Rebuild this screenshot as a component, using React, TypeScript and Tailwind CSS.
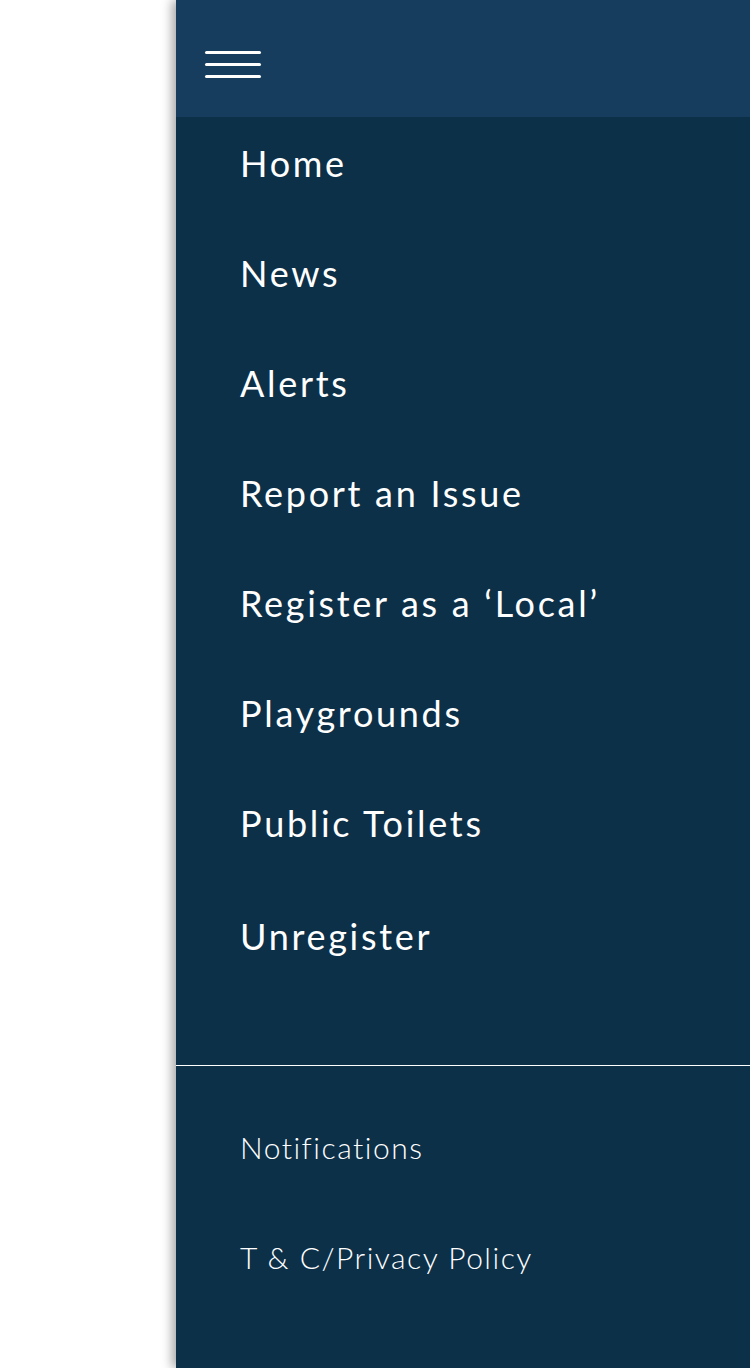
import React from "react";

const items = [
  "Home",
  "News",
  "Alerts",
  "Report an Issue",
  "Register as a \u2018Local\u2019",
  "Playgrounds",
  "Public Toilets",
];

const App = () => {
  return (
    <div className="flex w-[750px] h-[1368px] bg-white overflow-hidden" style={{ fontFamily: "Lato, 'Open Sans', sans-serif" }}>
      <div className="w-[176px] shrink-0 bg-white" />
      <div className="flex-1 flex flex-col bg-[#0d3049] shadow-[-4px_0_10px_rgba(0,0,0,0.35)] relative">
        <div className="h-[117px] bg-[#173d5e] flex items-center pl-[29px]">
          <div className="flex flex-col gap-[9px] pt-[11px]">
            <span className="block w-[56px] h-[3px] rounded-full bg-white" />
            <span className="block w-[56px] h-[3px] rounded-full bg-white" />
            <span className="block w-[56px] h-[3px] rounded-full bg-white" />
          </div>
        </div>
        <ul className="flex flex-col gap-[64px] pt-[23px] pl-[64px] text-white text-[36px] leading-[46px] tracking-[0.075em]">
          {items.map((t) => (
            <li key={t}>{t}</li>
          ))}
          <li className="mt-[3px]">Unregister</li>
        </ul>
        <div className="mt-[106px] h-px bg-white" />
        <ul className="flex flex-col gap-[70px] pt-[61px] pl-[64px] text-white text-[30px] leading-[40px] font-light tracking-[0.05em]">
          <li>Notifications</li>
          <li>T &amp; C/Privacy Policy</li>
        </ul>
      </div>
    </div>
  );
};

export default App;
